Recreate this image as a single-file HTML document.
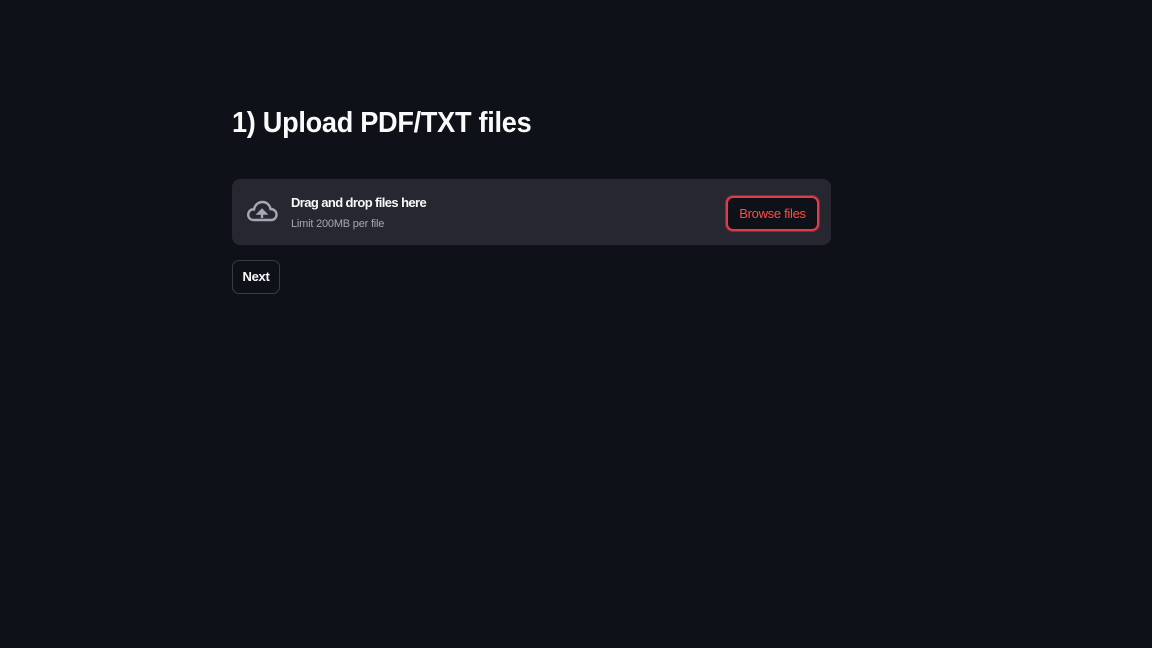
<!DOCTYPE html>
<html><head><style>
body{margin:0;width:1152px;height:648px;background:#0e1117;font-family:"Liberation Sans",sans-serif;color:#fafafa;position:relative;overflow:hidden}
h1{position:absolute;left:232px;top:105px;margin:0;font-size:29px;font-weight:bold;letter-spacing:-0.3px;line-height:36px;transform:scaleX(0.935);transform-origin:left}
.dz{position:absolute;left:232px;top:179px;width:599px;height:66px;background:#262730;border-radius:8px}
.t1{position:absolute;left:59px;top:16px;font-size:13px;font-weight:bold;letter-spacing:-0.6px}
.t2{position:absolute;left:59px;top:39px;font-size:11px;color:#a3a8b4;letter-spacing:-0.2px}
.br{position:absolute;left:494px;top:17px;width:89px;height:31px;border:2px solid #e03c4c;border-radius:7px;background:#0e1117;color:#ff4b4b;font-size:13px;text-align:center;line-height:31px;letter-spacing:-0.3px;box-shadow:0 0 0 1px rgba(255,75,75,.35)}
.nx{position:absolute;left:232px;top:260px;width:46px;height:32px;border:1px solid #3a3c45;border-radius:7px;font-size:13px;text-align:center;line-height:32px;font-weight:bold;letter-spacing:-0.3px}
svg{position:absolute;left:14px;top:19px}
</style></head><body>
<h1>1) Upload PDF/TXT files</h1>
<div class="dz">
<svg width="32" height="28" viewBox="0 0 32 28"><path d="M8 22 C3 22 1.5 18 2.5 15 C3.5 12 6 11 8 11.5 C9 6 13 4 16.5 4 C21 4 24 7.5 24.5 11 C28 11 30.5 13.5 30.5 16.5 C30.5 20 28 22 25 22 Z" fill="none" stroke="#a3a8b4" stroke-width="2.4"/><path d="M16 20 V14 M12.5 15.5 L16 12 L19.5 15.5 Z" stroke="#a3a8b4" stroke-width="2.4" fill="#a3a8b4"/></svg>
<div class="t1">Drag and drop files here</div>
<div class="t2">Limit 200MB per file</div>
<div class="br">Browse files</div>
</div>
<div class="nx">Next</div>
</body></html>
